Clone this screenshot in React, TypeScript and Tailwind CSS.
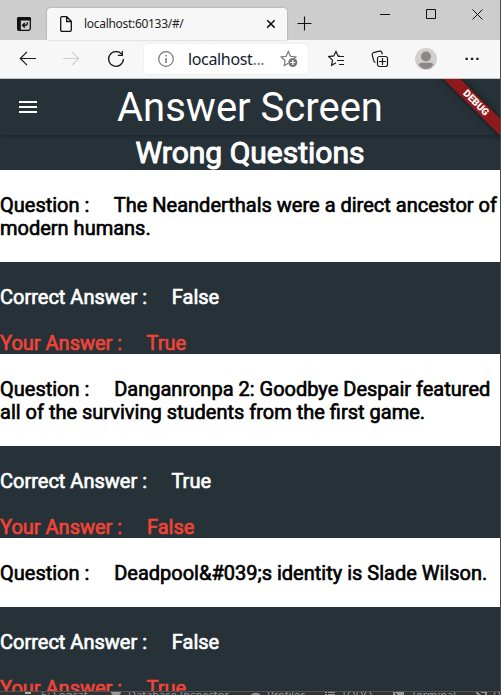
import type { ReactNode } from "react";

type Answer = { question: string; correct: string; yours: string };

const answers: Answer[] = [
  { question: "The Neanderthals were a direct ancestor of modern humans.", correct: "False", yours: "True" },
  { question: "Danganronpa 2: Goodbye Despair featured all of the surviving students from the first game.", correct: "True", yours: "False" },
  { question: "Deadpool&#039;s identity is Slade Wilson.", correct: "False", yours: "True" },
];

function Icon({ w, h, className = "", children }: { w: number; h: number; className?: string; children: ReactNode }) {
  return (
    <svg width={w} height={h} viewBox={`0 0 ${w} ${h}`} fill="none" stroke="currentColor" strokeWidth="1.2" className={`block shrink-0 ${className}`}>
      {children}
    </svg>
  );
}

function TabStrip() {
  return (
    <div className="flex h-10 bg-[#cdcdcd] text-[#101010]">
      <Icon w={16} h={16} className="ml-4 mt-4">
        <rect x="1.7" y="1.7" width="12.6" height="12.6" rx="1.8" strokeWidth="1.3" />
        <path d="M1.5 4V2.8q0-1.3 1.3-1.3h10.4q1.3 0 1.3 1.3V4zM2 4h2.2v10H2z" fill="currentColor" />
        <path d="M11.3 6.2v1.3q0 1.7-1.7 1.7H7M8.8 7L6.6 9.2l2.2 2.2" strokeWidth="1.4" />
      </Icon>
      <div className="ml-[15px] mt-2 flex h-8 w-60 rounded-t-[4px] bg-[#f7f7f7] shadow-[0_0_2px_rgba(0,0,0,0.3)]">
        <Icon w={14} h={18} className="ml-3 mt-[7px]">
          <path d="M2.2 1.6h5.5l4.6 4.7v8.8q0 1.3-1.3 1.3H3q-1.3 0-1.3-1.3V3q0-1.4 1.3-1.4M7.7 1.8v4.7h4.5" strokeWidth="1.3" />
        </Icon>
        <span className="ml-[11px] mt-2 h-4 w-[170px] whitespace-nowrap text-[12px] leading-4 tracking-[-0.3px] text-[#222]">localhost:60133/#/</span>
        <Icon w={10} h={10} className="ml-[12px] mt-[11px]">
          <path d="M1.2 1.2l7.4 7.4M8.6 1.2L1.2 8.6" strokeWidth="1.5" />
        </Icon>
      </div>
      <Icon w={15} h={15} className="ml-[10px] mt-4">
        <path d="M7.5.5v14M.5 7.5h14" strokeWidth="1.1" />
      </Icon>
      <Icon w={10} h={10} className="ml-[68px] mt-[9px]"><path d="M0 5.5h10" strokeWidth="1" /></Icon>
      <Icon w={10} h={10} className="ml-9 mt-[9px]"><path d="M.5.5h9v9h-9z" strokeWidth="1" /></Icon>
      <Icon w={11} h={11} className="ml-9 mt-[9px]"><path d="M.5.5l10 10M10.5.5l-10 10" strokeWidth="1" /></Icon>
    </div>
  );
}

function Toolbar() {
  return (
    <div className="flex h-[38px] items-center bg-[#f7f7f7] text-[#1a1a1a]">
      <Icon w={17} h={16} className="ml-[19px]"><path d="M17 7.500H1.5M8 .8L1.3 7.500 8 14.200" /></Icon>
      <Icon w={17} h={16} className="ml-[27px] text-[#d0d0d0]"><path d="M0 7.500h15.500M9 .8L15.700 7.500 9 14.200" /></Icon>
      <Icon w={18} h={18} className="ml-[27px]">
        <path d="M14.700 4.200A7.400 7.400 0 1 0 16.400 9M15.300 1v4.300H10.900" strokeWidth="1.300" />
      </Icon>
      <div className="ml-[19px] flex h-[30px] w-[164px] items-center rounded-[4px] bg-white shadow-[0_0_3px_rgba(0,0,0,0.08)]">
        <Icon w={16} h={16} className="ml-[14px] text-[#777]">
          <circle cx="8" cy="8" r="7.300" />
          <path d="M8 7v5M8 4v1.500" strokeWidth="1.500" />
        </Icon>
        <span className="ml-[14px] w-[92px] whitespace-nowrap text-[16px] leading-[22px] tracking-[-0.35px] text-[#16202c]">localhost<span className="text-[#777]">...</span></span>
        <Icon w={18} h={18} className="text-[#777]">
          <path d="M8.200 13.200L4.300 15.500l.7-5L1.200 7l5-.7L8.300 1.500l2.200 4.800 5.300.7-2 1.700" />
          <circle cx="12.800" cy="12.500" r="4.500" fill="currentColor" stroke="none" />
          <path d="M10.300 12.500h5M12.800 10v5" stroke="white" />
        </Icon>
      </div>
      <Icon w={18} h={18} className="ml-5">
        <path d="M12 6.200L10 5.900 8 1.500 5.800 5.900l-5 .7 3.700 3.500-.9 5.200L8 12.800" />
        <path d="M10 6.500h6M9 10.500h7M11 14.500h5" />
      </Icon>
      <Icon w={18} h={18} className="ml-[25px]">
        <rect x="6.500" y="6.500" width="10" height="10" rx="2" />
        <path d="M4.500 12.500Q3 12 2.700 10.600L1.200 4.800q-.4-1.600 1.200-2.100L8.500 1.200q1.600-.4 2.200 1l.7 2M8 11.500h7M11.500 8v7" />
      </Icon>
      <svg width="22" height="22" viewBox="0 0 22 22" className="ml-[26px] shrink-0">
        <circle cx="11" cy="11" r="11" fill="#d2d0ce" />
        <circle cx="11" cy="8.500" r="5" fill="#8b8886" />
        <path d="M3.500 16.500Q4.500 14.800 6.500 14.800h9q2 0 3 1.700Q15.700 21 11 21T3.500 16.500" fill="#8b8886" />
      </svg>
      <Icon w={14} h={4} className="ml-[28px]">
        <path d="M.5.700h2.300v2.300H.5zM5.900.700h2.300v2.300H5.900zM11.300.700h2.300v2.300h-2.300z" fill="currentColor" stroke="none" />
      </Icon>
    </div>
  );
}

function AnswerCard({ question, correct, yours }: Answer) {
  return (
    <section className="shrink-0 whitespace-pre-wrap text-[20px] leading-[23px] [-webkit-text-stroke:0.65px_currentColor]">
      <p className="bg-white pb-[22px] pt-6 text-black">{"Question :     " + question}</p>
      <p className="pt-6 text-white">{"Correct Answer :     " + correct}</p>
      <p className="-mb-px pt-[23px] text-[#f44336]">{"Your Answer :     " + yours}</p>
    </section>
  );
}

function QuizApp() {
  return (
    <main className="relative flex h-[612px] flex-col overflow-hidden bg-[#263238] font-[Roboto,sans-serif]">
      <header className="relative flex h-14 shrink-0 items-center bg-[#263238] shadow-[0_1px_4px_rgba(0,0,0,0.3)]">
        <svg width="18" height="12" className="ml-[19px] shrink-0" fill="white">
          <path d="M0 0h18v2H0zM0 5h18v2H0zM0 10h18v2H0z" />
        </svg>
        <h1 className="ml-20 whitespace-nowrap text-[40px] leading-[47px] text-white">Answer Screen</h1>
      </header>
      <h2 className="h-[35px] shrink-0 text-center text-[30px] leading-[35px] text-white [-webkit-text-stroke:1px_white]">Wrong Questions</h2>
      {answers.map((answer) => <AnswerCard key={answer.question} {...answer} />)}
      <div className="absolute right-[-28px] top-[17.5px] flex h-3 w-[104px] rotate-45 items-center justify-center bg-[#901a1b] text-[10px] font-black leading-3 text-white shadow-[0_0_6px_rgba(0,0,0,0.6)]">DEBUG</div>
    </main>
  );
}

function BackgroundStrip() {
  return (
    <div className="flex h-1 overflow-hidden border-t border-[#555] bg-[#313335] font-['Noto_Sans',sans-serif] text-[11px] leading-4 text-[#969696]">
      <span className="ml-[25px] h-[2px] w-[6px] shrink-0 bg-[#aaa]" />
      <span className="-mt-[5px] ml-[10px] w-[70px] shrink-0">6: Logcat</span>
      <span className="h-[3px] w-[10px] shrink-0 rounded-b-full bg-[#999]" />
      <span className="-mt-[5px] ml-[7px] w-[122px] shrink-0 whitespace-nowrap">Database Inspector</span>
      <Icon w={11} h={10}><path d="M1 8A5 5 0 0 1 10 4L5 8" strokeWidth="2" /></Icon>
      <span className="-mt-[5px] ml-[6px] w-[58px] shrink-0">Profiler</span>
      <Icon w={10} h={10}><path d="M0 .5h2m1 0h7M0 2.500h2m1 0h7" /></Icon>
      <span className="-mt-[5px] ml-[6px] w-[52px] shrink-0">TODO</span>
      <Icon w={11} h={10}><path d="M0 0h11v10H0z" fill="currentColor" /><path d="M2 1l3 3" stroke="#313335" /></Icon>
      <span className="-mt-[5px] ml-[7px] w-[65px] shrink-0">Terminal</span>
      <Icon w={11} h={10}><path d="M0 0l7 6M5 0h5v9" strokeWidth="2" /></Icon>
      <span className="-mt-[5px] ml-[6px] shrink-0">D</span>
    </div>
  );
}

export default function App() {
  return (
    <div className="h-[695px] w-[501px] overflow-hidden bg-[#313335] font-['Noto_Sans','Open_Sans',sans-serif]">
      <div className="h-[691px] w-[501px] border-r border-[#4b4b4b]">
        <TabStrip />
        <Toolbar />
        <div className="h-px bg-[#c5c5c5]" />
        <QuizApp />
      </div>
      <BackgroundStrip />
    </div>
  );
}
